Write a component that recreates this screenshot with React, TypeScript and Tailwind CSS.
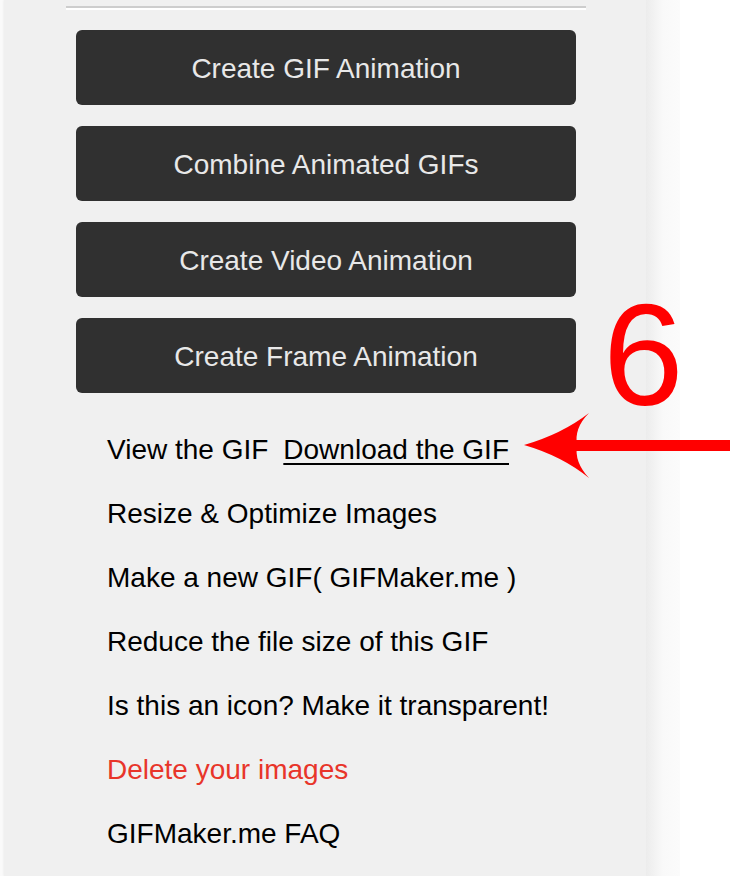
const buttons = [
  "Create GIF Animation",
  "Combine Animated GIFs",
  "Create Video Animation",
  "Create Frame Animation",
];

const links = [
  "Resize & Optimize Images",
  "Make a new GIF( GIFMaker.me )",
  "Reduce the file size of this GIF",
  "Is this an icon? Make it transparent!",
];

export default function App() {
  return (
    <div className="relative flex min-h-[876px] bg-white font-['Liberation_Sans',Arial,sans-serif]">
      <div className="w-[4px] bg-[#fafafa]" />

      {/* sidebar panel */}
      <div className="w-[642px] bg-[#f0f0f0] shadow-[1px_0_3px_rgba(0,0,0,0.18)]">
        <div className="ml-[62px] mr-[60px] mt-[6px] h-[2px] border-b-2 border-white bg-[#cdcdcd] box-content" />

        <div className="mt-[20px] flex flex-col gap-[21px] pl-[72px]">
          {buttons.map((b) => (
            <button
              key={b}
              className="flex h-[75px] w-[500px] items-center justify-center rounded-[6px] bg-[#303030] pt-[3px] text-[28px] text-[#e8e8e8]"
            >
              {b}
            </button>
          ))}
        </div>

        <div className="mt-[25px] flex flex-col pl-[103px] text-[28px] text-black">
          <div className="flex h-[64px] items-center">
            <span>View the GIF</span>
            <span className="ml-[15px] underline decoration-2 underline-offset-[4px]">Download the GIF</span>
          </div>
          {links.map((l) => (
            <div key={l} className="flex h-[64px] items-center">
              {l}
            </div>
          ))}
          <div className="flex h-[64px] items-center text-[#e8352a]">Delete your images</div>
          <div className="flex h-[64px] items-center">GIFMaker.me FAQ</div>
        </div>
      </div>

      <div className="w-[34px] bg-gradient-to-r from-[#ececec] via-[#f9f9f9] to-[#fbfbfb]" />
      <div className="flex-1 bg-white" />

      {/* annotation: step number and arrow */}
      <div className="pointer-events-none absolute left-[603px] top-[283px] text-[145px] leading-none text-[#ff0000]">
        6
      </div>
      <svg className="pointer-events-none absolute left-0 top-0" width="737" height="876">
        <rect x="572" y="440" width="158" height="11" fill="#ff0000" />
        <path
          d="M524 445 Q562 434 589 413 Q574 428 577 445 Q574 462 589 478 Q562 456 524 445 Z"
          fill="#ff0000"
        />
      </svg>
    </div>
  );
}
